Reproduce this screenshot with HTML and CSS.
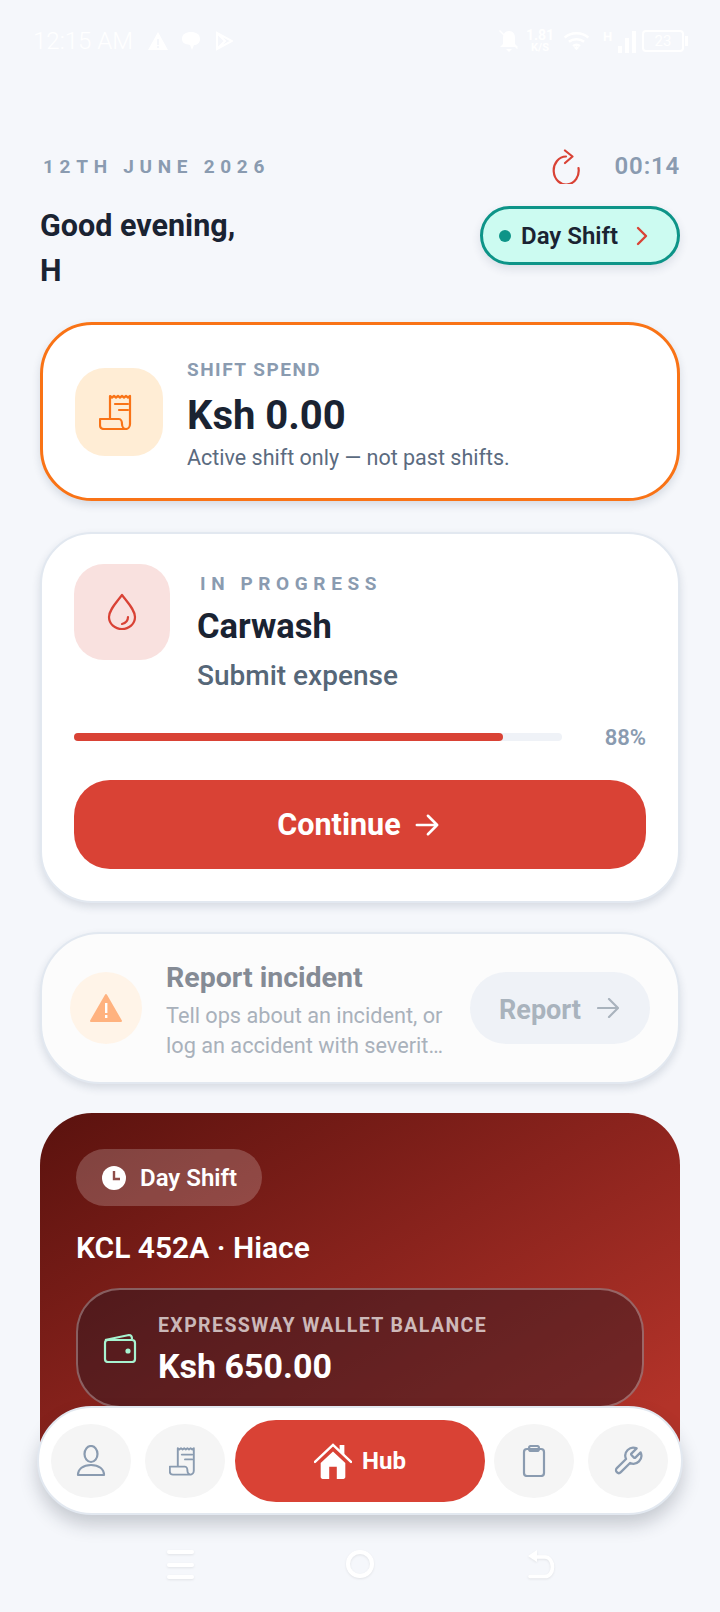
FILE: index.html
```html
<!DOCTYPE html>
<html lang="en">
<head>
    <meta charset="UTF-8">
    <meta name="viewport" content="width=device-width, initial-scale=1.0">
    <title>Hub</title>
    <link rel="stylesheet" href="styles.css">
</head>
<body>
<div class="phone">
    <div class="status-bar">
        <div class="status-left">
            <span class="clock">12:15 AM</span>
            <svg width="20" height="18" viewBox="0 0 20 18"><path fill="#fff" fill-rule="evenodd" d="M10 0 20 18H0ZM9 7v6h2V7ZM9 14v2h2v-2Z"/></svg>
            <svg class="bubble" width="20" height="20" viewBox="0 0 20 20"><path fill="#fff" d="M10 1c5 0 9 2 9 7 0 4-3 6-6 6l-2 5-2-5C4 13 1 12 1 8c0-5 4-7 9-7Z"/></svg>
            <svg class="play" width="18" height="20" viewBox="0 0 18 20" fill="none" stroke="#fff" stroke-width="2"><path d="M2 2v16l15-8ZM2 2l8 8-8 8"/></svg>
        </div>
        <div class="status-right">
            <svg width="20" height="24" viewBox="0 0 20 24"><path fill="#fff" d="M10 2c4 0 6 3 6 7v6l3 3H1l3-3V9c0-4 2-7 6-7ZM7 20h6l-3 3ZM1 1l18 18-1 1L0 2Z"/></svg>
            <div class="net-speed"><b>1.81</b><b class="net-unit">K/S</b></div>
            <svg class="wifi" width="27" height="22" viewBox="0 0 32 24" fill="none" stroke="#fff" stroke-width="3"><path d="M2 8c7-7 21-7 28 0M7 13c5-4 13-4 18 0M12 18c2-2 6-2 8 0"/><path fill="#fff" stroke="none" d="m13 20 3-2 3 2-3 3Z"/></svg>
            <div class="signal">
                <b>H</b>
                <i class="s1"></i><i class="s2"></i><i class="s3"></i>
            </div>
            <div class="battery"><span>23</span></div>
            <i class="battery-tip"></i>
        </div>
    </div>

    <main class="scroll">
        <div class="date-row">
            <span class="date">12TH JUNE 2026</span>
            <div class="timer">
                <svg width="28" height="35" viewBox="0 0 28 35" fill="none" stroke="#d94235" stroke-width="2.2" stroke-linecap="round" stroke-linejoin="round"><path d="M26.500 19A12.500 14 0 1 1 14 7.500"/><path d="M13 1.500 20.500 7.500 13 14"/></svg>
                <span class="elapsed">00:14</span>
            </div>
        </div>

        <div class="greeting-row">
            <h1 class="greeting">Good evening,<br>H</h1>
            <div class="shift-pill">
                <i class="dot"></i>
                <span>Day Shift</span>
                <svg width="14" height="20" viewBox="0 0 14 20" fill="none" stroke="#d94235" stroke-width="2.4" stroke-linecap="round" stroke-linejoin="round"><path d="m3 2 8 8-8 8"/></svg>
            </div>
        </div>

        <section class="card spend-card">
            <div class="icon-box spend-icon">
                <svg width="40" height="36" viewBox="0 0 40 36" fill="none" stroke="#f97316" stroke-width="2.2" stroke-linejoin="round"><path d="M11 25V2l2 1.500 2-1.500 2 1.500 2-1.500 2 1.500 2-1.500 2 1.500 2-1.500 2 1.500 2-1.500V30c0 3-2 5-4 5s-4-2-4-5c0-2-1-5-3-5H1v6c0 3 2 4 4 4h23" /><path d="M16 10h13M20 16h9" stroke-linecap="round"/></svg>
            </div>
            <div class="spend-text">
                <div class="spend-label">SHIFT SPEND</div>
                <div class="spend-amount">Ksh 0.00</div>
                <div class="spend-note">Active shift only — not past shifts.</div>
            </div>
        </section>

        <section class="card progress-card">
            <div class="task-row">
                <div class="icon-box task-icon">
                    <svg width="30" height="38" viewBox="0 0 30 38" fill="none" stroke="#d94235" stroke-width="2.2" stroke-linecap="round" stroke-linejoin="round"><path d="M15 2C9 10 2 17 2 24c0 7 6 12 13 12s13-5 13-12C28 17 21 10 15 2Z"/><path d="M21 24c0 4-2 6-6 7"/></svg>
                </div>
                <div class="task-text">
                    <div class="task-label">IN PROGRESS</div>
                    <div class="task-name">Carwash</div>
                    <div class="task-step">Submit expense</div>
                </div>
            </div>
            <div class="progress-row">
                <div class="track"><div class="fill" style="width: 88%"></div></div>
                <span class="percent">88%</span>
            </div>
            <div class="continue-btn">
                <span>Continue</span>
                <svg width="24" height="24" viewBox="0 0 26 24" fill="none" stroke="#fff" stroke-width="2.8" stroke-linecap="round" stroke-linejoin="round"><path d="M2 12h22M14 2l10 10-10 10"/></svg>
            </div>
        </section>

        <section class="card incident-card">
            <div class="incident-icon">
                <svg width="32" height="30" viewBox="0 0 32 30"><path fill="#ffb27f" stroke="#ffb27f" stroke-width="2" stroke-linejoin="round" d="M16 2 31 28H1Z"/><path fill="#fff" d="M15 10h2.400v10H15ZM15 22h2.400v3H15Z"/></svg>
            </div>
            <div class="incident-text">
                <div class="incident-title">Report incident</div>
                <div class="incident-desc">Tell ops about an incident, or<br>log an accident with severit…</div>
            </div>
            <div class="report-btn">
                <span>Report</span>
                <svg width="22" height="20" viewBox="0 0 22 20" fill="none" stroke="#a9b3bd" stroke-width="2.200" stroke-linecap="round" stroke-linejoin="round"><path d="M1 10h19M12 1l9 9-9 9"/></svg>
            </div>
        </section>

        <section class="hero">
            <div class="hero-pill">
                <svg width="24" height="24" viewBox="0 0 24 24"><circle cx="12" cy="12" r="12" fill="#fff"/><path d="M12 5v8h6" fill="none" stroke="#8f4d49" stroke-width="2.400"/></svg>
                <span>Day Shift</span>
            </div>
            <div class="vehicle">KCL 452A · Hiace</div>
            <div class="wallet">
                <svg width="34" height="30" viewBox="0 0 34 30" fill="none" stroke="#a7f3d0" stroke-width="2.200" stroke-linejoin="round"><path d="M2 7 26 2c2 0 3 1 3 4"/><rect x="2" y="7" width="30" height="22" rx="3"/><circle cx="25" cy="18" r="1.500" fill="#a7f3d0"/></svg>
                <div class="wallet-text">
                    <div class="wallet-label">EXPRESSWAY WALLET BALANCE</div>
                    <div class="wallet-amount">Ksh 650.00</div>
                </div>
            </div>
        </section>
    </main>

    <nav class="tab-bar">
        <div class="tab">
            <svg width="30" height="32" viewBox="0 0 30 32" fill="none" stroke="#8a9bb0" stroke-width="2.200" stroke-linejoin="round"><ellipse cx="15" cy="9" rx="6.500" ry="8"/><path d="M2 30c0-6 5-10 13-10s13 4 13 10Z"/></svg>
        </div>
        <div class="tab">
            <svg width="32" height="30" viewBox="0 0 40 36" fill="none" stroke="#8a9bb0" stroke-width="2.400" stroke-linejoin="round"><path d="M11 25V2l2 1.500 2-1.500 2 1.500 2-1.500 2 1.500 2-1.500 2 1.500 2-1.500 2 1.500 2-1.500V30c0 3-2 5-4 5s-4-2-4-5c0-2-1-5-3-5H1v6c0 3 2 4 4 4h23"/><path d="M16 10h13M20 16h9" stroke-linecap="round"/></svg>
        </div>
        <div class="tab-hub">
            <svg width="38" height="36" viewBox="0 0 40 38"><path fill="#fff" d="M7 21 20 9l13 12v15c0 1-1 2-2 2h-7V25h-8v13H9c-1 0-2-1-2-2Z"/><path fill="none" stroke="#fff" stroke-width="2.600" stroke-linecap="round" d="M1 20 20 2l19 18"/><path fill="#fff" d="M27 2h5v12l-5-5Z"/></svg>
            <span>Hub</span>
        </div>
        <div class="tab">
            <svg width="24" height="32" viewBox="0 0 24 32" fill="none" stroke="#8a9bb0" stroke-width="2.200" stroke-linejoin="round"><rect x="2" y="4" width="20" height="27" rx="3"/><rect x="7" y="1" width="10" height="5" rx="2"/></svg>
        </div>
        <div class="tab">
            <svg width="32" height="32" viewBox="0 0 24 24" fill="none" stroke="#8a9bb0" stroke-width="1.700" stroke-linecap="round" stroke-linejoin="round"><path d="M14.700 6.300a1 1 0 0 0 0 1.400l1.600 1.600a1 1 0 0 0 1.400 0l3.770-3.770a6 6 0 0 1-7.940 7.940l-6.910 6.910a2.120 2.120 0 0 1-3-3l6.910-6.910a6 6 0 0 1 7.940-7.940l-3.760 3.760z"/></svg>
        </div>
    </nav>

    <div class="system-nav">
        <div class="sys-menu"><i></i><i></i><i></i></div>
        <i class="sys-home"></i>
        <svg width="28" height="29" viewBox="0 0 28 29" fill="none" stroke="#fff" stroke-width="3.600" stroke-linecap="round"><path d="M3 26.500h15c4 0 7.500-3.500 7.500-9.500S22 7 18 7H6"/><path fill="#fff" stroke="none" d="M10 0v12L1 6Z"/></svg>
    </div>
</div>
</body>
</html>
```

FILE: styles.css
```css
* {
    box-sizing: border-box;
}
html, body {
    margin: 0;
    padding: 0;
}
body {
    font-family: Roboto, "Liberation Sans", sans-serif;
    background-color: #f5f7fb;
    color: #1a2332;
}
.phone {
    position: relative;
    width: 720px;
    height: 1612px;
    overflow: hidden;
}

/* status bar */
.status-bar {
    height: 82px;
    padding: 23px 32px 0 33px;
    display: flex;
    justify-content: space-between;
    align-items: flex-start;
    color: #fff;
}
.status-left, .status-right {
    display: flex;
    align-items: center;
    height: 36px;
}
.status-left {
    gap: 13px;
}
.play {
    margin-left: 1px;
}
.clock {
    font-size: 24px;
    font-weight: 300;
    margin-right: 2px;
}
.net-speed {
    display: flex;
    flex-direction: column;
    align-items: center;
    width: 26px;
    margin: 0 10px 0 8px;
    font-size: 14px;
    line-height: 14px;
}
.net-unit {
    font-size: 11px;
    line-height: 12px;
}
.signal {
    position: relative;
    width: 33px;
    height: 24px;
    margin: 0 6px 0 13px;
    display: flex;
    align-items: flex-end;
    justify-content: flex-end;
    gap: 3px;
}
.signal b {
    position: absolute;
    left: 0;
    top: 0;
    font-size: 13px;
}
.signal i {
    width: 4px;
    background: #fff;
}
.s1 { height: 7px; }
.s2 { height: 15px; }
.s3 { height: 22px; }
.battery {
    width: 42px;
    height: 22px;
    border: 2px solid #fff;
    border-radius: 4px;
    font-size: 15px;
    text-align: center;
    line-height: 18px;
}
.battery-tip {
    width: 3px;
    height: 10px;
    margin-left: 1px;
    background: #fff;
}

/* scrolling part */
.scroll {
    height: 1361px;
    overflow: hidden;
    padding: 66px 40px 0;
}
.date-row {
    display: flex;
    justify-content: space-between;
    align-items: center;
    height: 36px;
}
.date {
    font-size: 19px;
    font-weight: 700;
    letter-spacing: 5.7px;
    color: #8a9bb0;
    padding-left: 3px;
}
.timer {
    display: flex;
    align-items: center;
    gap: 35px;
}
.elapsed {
    font-size: 24px;
    font-weight: 600;
    letter-spacing: 0.8px;
    color: #8a9bb0;
}
.greeting-row {
    display: flex;
    justify-content: space-between;
    align-items: flex-start;
    margin-top: 20px;
}
.greeting {
    margin: -1px 0 0;
    font-size: 30.5px;
    line-height: 45px;
    font-weight: 700;
}
.shift-pill {
    display: flex;
    align-items: center;
    width: 200px;
    height: 59px;
    margin-top: 2px;
    padding-left: 16px;
    background: #ccfbf1;
    border: 3px solid #0d9488;
    border-radius: 30px;
    box-shadow: 0 4px 10px rgba(30, 50, 80, 0.12);
    font-size: 24px;
    font-weight: 600;
}
.dot {
    width: 12px;
    height: 12px;
    border-radius: 50%;
    background: #0d9488;
    margin-right: 10px;
}
.shift-pill svg {
    margin-left: 17px;
}

/* cards */
.card {
    background: #fff;
    border: 2px solid #e2e8f0;
    border-radius: 52px;
    box-shadow: 0 4px 8px rgba(30, 50, 80, 0.14);
}
.icon-box {
    display: flex;
    align-items: center;
    justify-content: center;
    border-radius: 30px;
    flex-shrink: 0;
}
.spend-card {
    display: flex;
    align-items: center;
    height: 179px;
    margin-top: 29px;
    padding-left: 32px;
    border: 3px solid #f97316;
}
.spend-icon {
    width: 88px;
    height: 88px;
    background: #ffedd5;
}
.spend-text {
    margin-left: 24px;
    padding: 7px 0 2px;
}
.spend-label {
    font-size: 19px;
    font-weight: 700;
    letter-spacing: 1.5px;
    color: #8a9bb0;
    line-height: 26px;
}
.spend-amount {
    margin-top: 3px;
    font-size: 40px;
    font-weight: 700;
    line-height: 60px;
}
.spend-note {
    margin-top: -2px;
    font-size: 21.500px;
    line-height: 28px;
    color: #5b6b7f;
}
.progress-card {
    height: 371px;
    margin-top: 31px;
    padding: 30px 32px 0;
}
.task-row {
    display: flex;
    align-items: flex-start;
}
.task-icon {
    width: 96px;
    height: 96px;
    background: #f9e1df;
}
.task-text {
    margin-left: 27px;
    padding-top: 7px;
}
.task-label {
    font-size: 19px;
    font-weight: 700;
    letter-spacing: 5.6px;
    color: #8a9bb0;
    padding-left: 3px;
    line-height: 26px;
}
.task-name {
    font-size: 34.500px;
    font-weight: 700;
    line-height: 58px;
}
.task-step {
    font-size: 28px;
    font-weight: 500;
    color: #566778;
    line-height: 42px;
}
.progress-row {
    display: flex;
    align-items: center;
    justify-content: space-between;
    height: 24px;
    margin-top: 28px;
}
.track {
    width: 488px;
    height: 8px;
    background: #eff2f7;
    border-radius: 4px;
}
.fill {
    height: 8px;
    background: #d94235;
    border-radius: 4px;
}
.percent {
    font-size: 22px;
    font-weight: 600;
    color: #8a9bb0;
}
.continue-btn {
    display: flex;
    align-items: center;
    justify-content: center;
    gap: 14px;
    height: 89px;
    margin-top: 31px;
    padding-right: 4px;
    background: #d94235;
    border-radius: 36px;
    color: #fff;
    font-size: 30.5px;
    font-weight: 700;
}
.incident-card {
    display: flex;
    align-items: center;
    height: 152px;
    margin-top: 29px;
    padding: 0 28px;
    background: #fcfcfc;
    border-radius: 60px;
}
.incident-icon {
    width: 72px;
    height: 72px;
    border-radius: 50%;
    background: #fff4e8;
    display: flex;
    align-items: center;
    justify-content: center;
    flex-shrink: 0;
}
.incident-text {
    width: 280px;
    margin-left: 24px;
    padding-top: 4px;
    flex-shrink: 0;
}
.incident-title {
    font-size: 28.500px;
    font-weight: 700;
    color: #858b95;
    line-height: 38px;
}
.incident-desc {
    margin-top: 4px;
    font-size: 21.700px;
    line-height: 30px;
    color: #a9b1bb;
    white-space: nowrap;
}
.report-btn {
    display: flex;
    align-items: center;
    justify-content: center;
    gap: 16px;
    width: 180px;
    height: 72px;
    margin-left: 24px;
    padding-right: 2px;
    flex-shrink: 0;
    background: #eff2f7;
    border-radius: 36px;
    color: #a9b3bd;
    font-size: 27px;
    font-weight: 700;
}
.report-btn span {
    padding-top: 3px;
}

/* dark shift card */
.hero {
    height: 400px;
    margin-top: 29px;
    padding: 36px 36px 0;
    border-radius: 52px;
    background: linear-gradient(150deg, #5a120e 0%, #8a231d 45%, #b33329 85%);
    color: #fff;
}
.hero-pill {
    display: flex;
    align-items: center;
    gap: 14px;
    width: 186px;
    height: 57px;
    padding-left: 26px;
    border-radius: 29px;
    background: rgba(255, 255, 255, 0.2);
    font-size: 24px;
    font-weight: 600;
}
.vehicle {
    margin-top: 22px;
    font-size: 30px;
    font-weight: 600;
    line-height: 40px;
}
.wallet {
    display: flex;
    align-items: center;
    gap: 21px;
    height: 120px;
    margin-top: 20px;
    padding-left: 25px;
    border: 2px solid rgba(255, 255, 255, 0.3);
    border-radius: 44px;
    background: rgba(30, 25, 35, 0.42);
}
.wallet-text {
    padding-top: 4px;
}
.wallet-label {
    font-size: 19.500px;
    font-weight: 700;
    letter-spacing: 1.4px;
    line-height: 30px;
    color: rgba(255, 255, 255, 0.7);
}
.wallet-amount {
    margin-top: 2px;
    font-size: 34px;
    font-weight: 700;
    line-height: 46px;
}

/* floating bottom nav */
.tab-bar {
    position: absolute;
    left: 37px;
    top: 1406px;
    width: 646px;
    height: 109px;
    padding: 0 12px;
    display: flex;
    align-items: center;
    gap: 14px;
    background: #fff;
    border: 2px solid #e2e8f0;
    border-radius: 55px;
    box-shadow: 0 10px 18px rgba(30, 40, 60, 0.22);
}
.tab {
    width: 80px;
    height: 74px;
    border-radius: 50%;
    background: #f5f5f5;
    display: flex;
    align-items: center;
    justify-content: center;
    flex-shrink: 0;
}
.tab-hub {
    width: 250px;
    height: 82px;
    margin: 0 -5px 0 -4px;
    border-radius: 41px;
    background: #d94235;
    color: #fff;
    display: flex;
    align-items: center;
    justify-content: center;
    gap: 10px;
    font-size: 24px;
    font-weight: 700;
    flex-shrink: 0;
}

/* android buttons */
.system-nav {
    position: absolute;
    left: 0;
    right: 0;
    top: 1550px;
    height: 30px;
}
.system-nav > * {
    position: absolute;
    top: 0;
    filter: drop-shadow(0 1px 1px rgba(0, 0, 0, 0.08));
}
.sys-menu {
    left: 167px;
    width: 27px;
    height: 29px;
    display: flex;
    flex-direction: column;
    justify-content: space-between;
}
.sys-menu i {
    height: 4px;
    border-radius: 2px;
    background: #fff;
}
.sys-home {
    left: 346px;
    width: 28px;
    height: 28px;
    border: 4px solid #fff;
    border-radius: 50%;
}
.system-nav svg {
    left: 527px;
}
```
